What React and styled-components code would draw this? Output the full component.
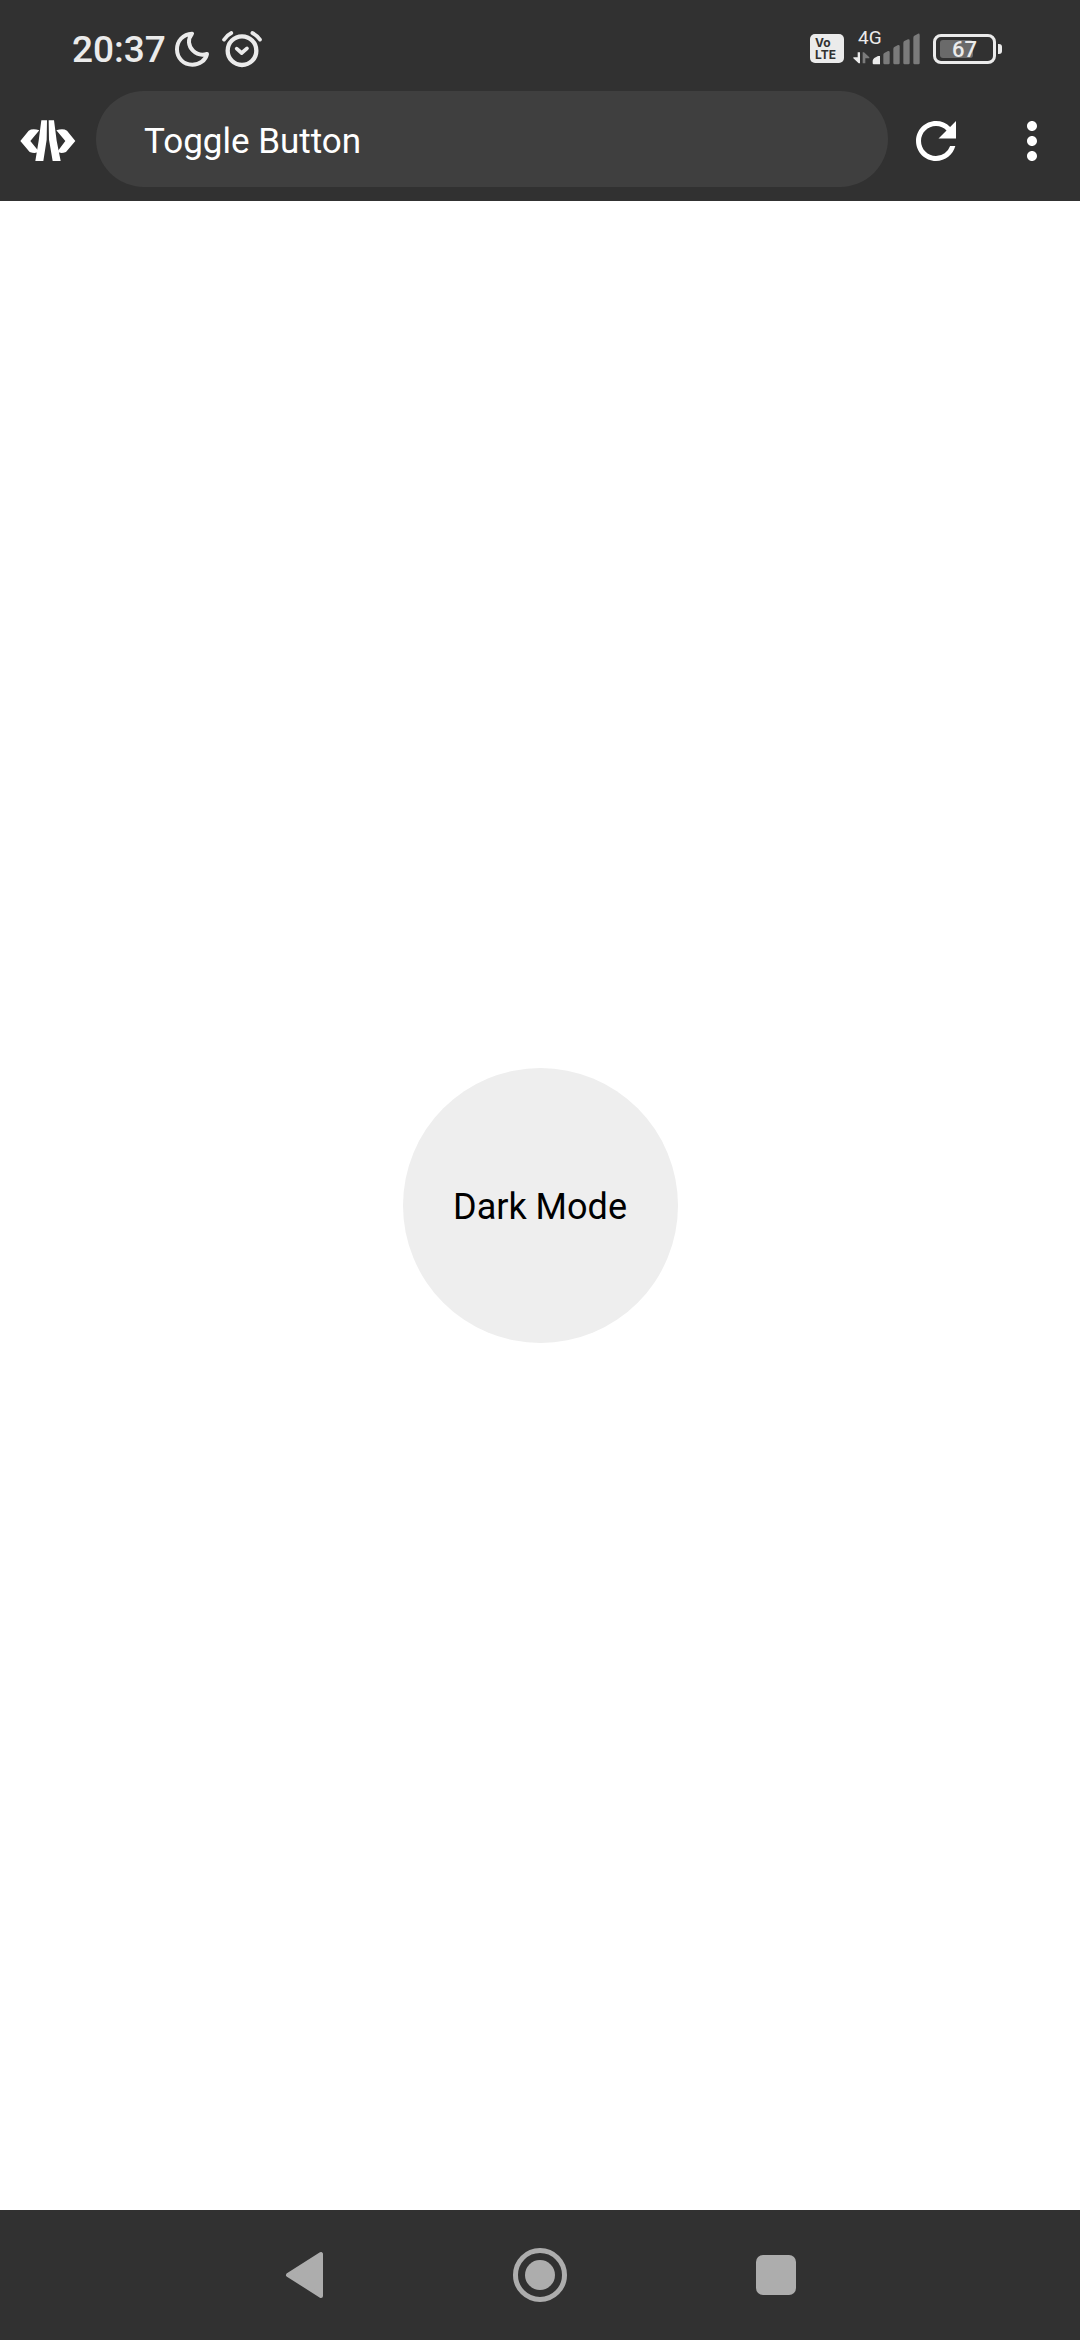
import React, { useState } from "react";
import styled, { createGlobalStyle } from "styled-components";
import { MdRefresh, MdMoreVert } from "react-icons/md";

const GlobalStyle = createGlobalStyle`
  *, *::before, *::after { box-sizing: border-box; }
  body {
    margin: 0;
    font-family: Roboto, "Noto Sans", sans-serif;
  }
`;

const Screen = styled.div`
  display: flex;
  flex-direction: column;
  min-height: 100vh;
`;

const StatusBar = styled.header`
  display: flex;
  align-items: center;
  justify-content: space-between;
  height: 91px;
  padding: 6px 78px 0 72px;
  background: #313131;
  color: #ebebeb;
`;

const StatusGroup = styled.div`
  display: flex;
  align-items: center;
  gap: ${({ $gap }) => $gap}px;
`;

const Clock = styled.time`
  padding-top: 3px;
  font-size: 37px;
  line-height: 44px;
  font-weight: 500;
`;

const Glyph = styled.svg`
  display: block;
  flex: none;
  overflow: visible;
`;

const VolteBadge = styled.span`
  display: flex;
  flex-direction: column;
  justify-content: center;
  width: 34px;
  height: 29px;
  padding-left: 5px;
  border-radius: 5px;
  background: #ebebeb;
  color: #313131;
  font: 700 12px/12px Inter, sans-serif;
`;

const Signal = styled.span`
  position: relative;
`;

const NetworkLabel = styled.span`
  position: absolute;
  top: -4px;
  left: 4px;
  font-size: 19px;
  line-height: 22px;
`;

const Battery = styled.span`
  display: flex;
  align-items: center;
  gap: 2px;
`;

const BatteryCase = styled.span`
  position: relative;
  display: flex;
  width: 63px;
  height: 30px;
  padding: 3px 4px;
  border: 3px solid #ebebeb;
  border-radius: 8px;
`;

const BatteryLevel = styled.span`
  border-radius: 3px;
  background: #6a6a6a;
`;

const BatteryText = styled.span`
  position: absolute;
  inset: 0;
  text-align: center;
  font-size: 22px;
  line-height: 26px;
  font-weight: 500;
`;

const BatteryTip = styled.span`
  width: 4px;
  height: 10px;
  border-radius: 0 3px 3px 0;
  background: #ebebeb;
`;

const Toolbar = styled.div`
  display: flex;
  align-items: center;
  height: 110px;
  padding-bottom: 10px;
  background: #313131;
`;

const ToolButton = styled.button`
  display: flex;
  align-items: center;
  justify-content: center;
  flex: none;
  width: 96px;
  height: 96px;
  padding: 0;
  border: 0;
  background: none;
  color: #fff;
`;

const PageTitle = styled.input`
  flex: 1;
  align-self: flex-start;
  min-width: 0;
  height: 96px;
  padding: 4px 48px 0;
  border: 0;
  border-radius: 48px;
  outline: 0;
  background: #3f3f3f;
  color: #fff;
  font: 400 35px/44px Roboto, "Noto Sans", sans-serif;
`;

const Page = styled.main`
  display: flex;
  flex: 1;
  align-items: center;
  justify-content: center;
  background: ${({ $dark }) => ($dark ? "#000" : "#fff")};
`;

const ModeButton = styled.button`
  width: 275px;
  height: 275px;
  padding: 2px 0 0;
  border: 0;
  border-radius: 50%;
  background: ${({ $dark }) => ($dark ? "#222" : "#eee")};
  color: ${({ $dark }) => ($dark ? "#fff" : "#000")};
  font: 400 36px/44px Roboto, "Noto Sans", sans-serif;
`;

const NavBar = styled.nav`
  display: flex;
  justify-content: center;
  height: 130px;
  background: #313131;
`;

const NavButton = styled.button`
  display: flex;
  align-items: center;
  justify-content: center;
  width: 236px;
  padding: 0;
  border: 0;
  background: none;
  color: #adadad;
`;

function MoonIcon() {
  return (
    <Glyph width="41" height="38" viewBox="336 56 123 114" fill="none" stroke="currentColor" strokeWidth="12" strokeLinejoin="round">
      <path d="M393 67C366 68 348 89 348 114C348 141 368 160 394 160C416 160 434 147 438 128C424 132 408 130 396 118C382 104 379 84 393 67Z" />
    </Glyph>
  );
}

function AlarmIcon() {
  return (
    <Glyph width="42" height="38" viewBox="485 56 126 114" fill="none" stroke="currentColor" strokeWidth="11" strokeLinecap="round" strokeLinejoin="round">
      <circle cx="548" cy="118" r="43" strokeWidth="13" />
      <path d="M532 112L547 125L563 111" />
      <path d="M494 85Q502 72 516 65M579 65Q593 72 602 85" />
    </Glyph>
  );
}

function SignalIcon() {
  return (
    <Glyph width="69" height="35" viewBox="186 62 207 105">
      <g fill="#ebebeb">
        <path d="M197 126H204V159H200L184 144V141H197Z" />
        <path d="M242 151Q243 146 247 143L258 137H264V162H245Q242 162 242 159Z" />
      </g>
      <g fill="#7b7b7b">
        <path d="M212 126H216L232 141V144H220V159H212Z" />
        <path d="M274 133Q274 130 277 128L288 122Q293 121 293 126V158Q293 162 289 162H278Q274 162 274 158Z" />
        <path d="M304 116Q304 112 307 110L318 104Q323 103 323 108V158Q323 162 319 162H308Q304 162 304 158Z" />
        <path d="M334 98Q334 94 337 92L348 87Q353 86 353 91V158Q353 162 349 162H338Q334 162 334 158Z" />
        <path d="M364 82Q364 78 367 76L378 70Q383 69 383 74V158Q383 162 379 162H368Q364 162 364 158Z" />
      </g>
    </Glyph>
  );
}

function CodeIcon() {
  return (
    <Glyph width="56" height="42" viewBox="60 106 168 126" fill="currentColor">
      <path d="M61 169L86 138Q98 130 118 137L91 169L116 200Q108 209 89 202Z" />
      <path d="M226 169L201 138Q189 130 169 137L196 169L173 200Q180 209 198 202Z" />
      <path d="M124 107H141L140 165L130 229H106L116 168Z" />
      <path d="M146 107H162L170 168L182 229H158L147 165Z" />
    </Glyph>
  );
}

function BackIcon() {
  return (
    <Glyph width="38" height="46" viewBox="0 0 38 46" fill="currentColor" stroke="currentColor" strokeWidth="4" strokeLinejoin="round">
      <path d="M36 2V44L3 23Z" />
    </Glyph>
  );
}

function HomeIcon() {
  return (
    <Glyph width="54" height="54" viewBox="0 0 108 108">
      <circle cx="54" cy="54" r="49" fill="none" stroke="currentColor" strokeWidth="10" />
      <circle cx="54" cy="54" r="30" fill="currentColor" />
    </Glyph>
  );
}

function RecentsIcon() {
  return (
    <Glyph width="40" height="40" viewBox="0 0 40 40" fill="currentColor">
      <rect width="40" height="40" rx="7" />
    </Glyph>
  );
}

export default function App() {
  const [dark, setDark] = useState(false);
  const charge = 67;

  return (
    <Screen>
      <GlobalStyle />
      <StatusBar>
        <StatusGroup $gap={7}>
          <Clock>20:37</Clock>
          <MoonIcon />
          <AlarmIcon />
        </StatusGroup>
        <StatusGroup $gap={10}>
          <VolteBadge>
            <span>Vo</span>
            <span>LTE</span>
          </VolteBadge>
          <Signal>
            <SignalIcon />
            <NetworkLabel>4G</NetworkLabel>
          </Signal>
          <Battery>
            <BatteryCase>
              <BatteryLevel style={{ width: `${charge}%` }} />
              <BatteryText>{charge}</BatteryText>
            </BatteryCase>
            <BatteryTip />
          </Battery>
        </StatusGroup>
      </StatusBar>
      <Toolbar>
        <ToolButton aria-label="Source code">
          <CodeIcon />
        </ToolButton>
        <PageTitle aria-label="Page title" defaultValue="Toggle Button" />
        <ToolButton aria-label="Reload">
          <MdRefresh size={60} />
        </ToolButton>
        <ToolButton aria-label="More options">
          <MdMoreVert size={60} />
        </ToolButton>
      </Toolbar>
      <Page $dark={dark}>
        <ModeButton $dark={dark} onClick={() => setDark(!dark)}>
          {dark ? "Light Mode" : "Dark Mode"}
        </ModeButton>
      </Page>
      <NavBar>
        <NavButton aria-label="Back">
          <BackIcon />
        </NavButton>
        <NavButton aria-label="Home">
          <HomeIcon />
        </NavButton>
        <NavButton aria-label="Recent apps">
          <RecentsIcon />
        </NavButton>
      </NavBar>
    </Screen>
  );
}
